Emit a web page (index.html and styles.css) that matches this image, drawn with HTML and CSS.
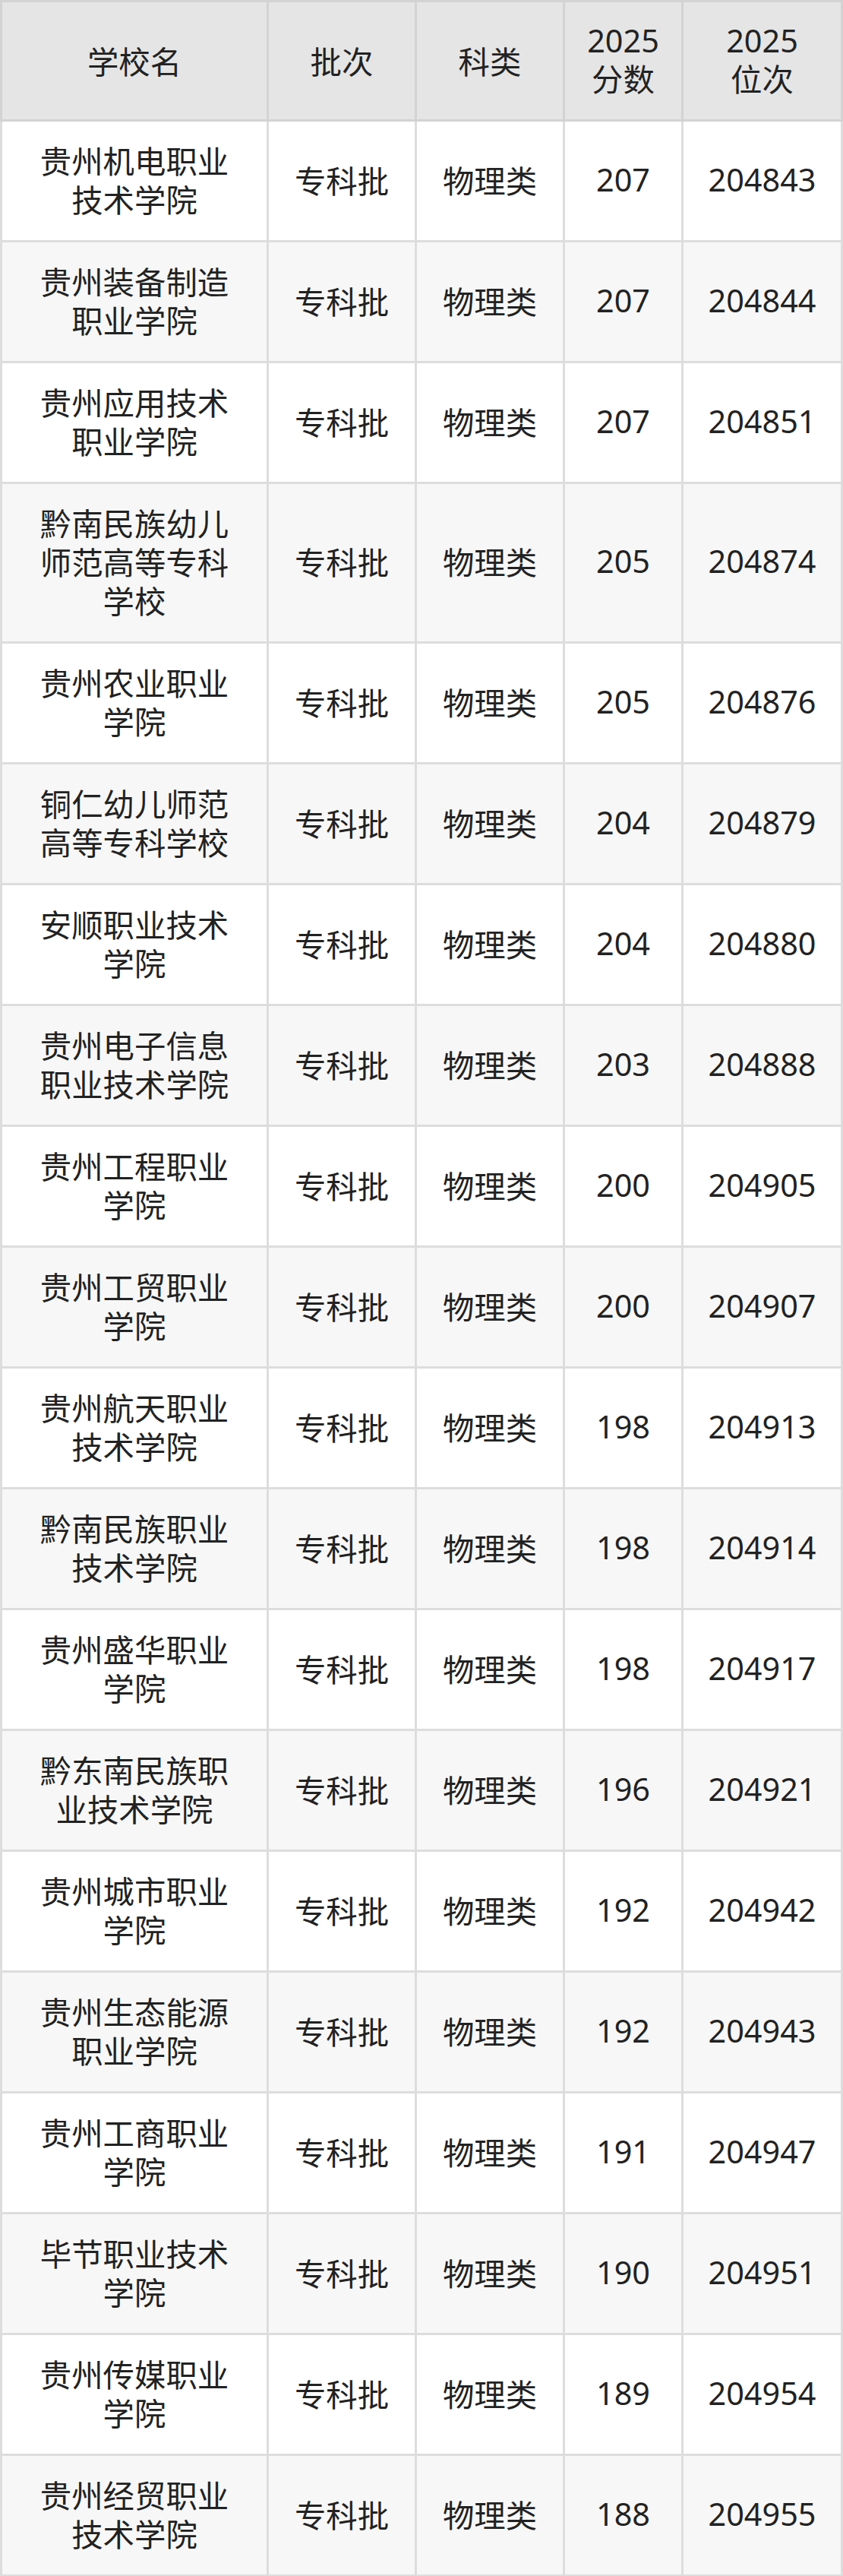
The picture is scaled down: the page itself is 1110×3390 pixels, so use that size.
FILE: index.html
```html
<!DOCTYPE html>
<html lang="zh-CN">
<head>
<meta charset="utf-8">
<title>贵州专科批物理类</title>
<link rel="stylesheet" href="styles.css">
</head>
<body>
<div class="table">
  <div class="row head">
    <div class="cell name">学校名</div>
    <div class="cell">批次</div>
    <div class="cell">科类</div>
    <div class="cell num two">2025<br>分数</div>
    <div class="cell num two">2025<br>位次</div>
  </div>
  <div class="row"><div class="cell name">贵州机电职业技术学院</div><div class="cell">专科批</div><div class="cell">物理类</div><div class="cell num">207</div><div class="cell num">204843</div></div>
  <div class="row alt"><div class="cell name">贵州装备制造职业学院</div><div class="cell">专科批</div><div class="cell">物理类</div><div class="cell num">207</div><div class="cell num">204844</div></div>
  <div class="row"><div class="cell name">贵州应用技术职业学院</div><div class="cell">专科批</div><div class="cell">物理类</div><div class="cell num">207</div><div class="cell num">204851</div></div>
  <div class="row alt"><div class="cell name">黔南民族幼儿师范高等专科学校</div><div class="cell">专科批</div><div class="cell">物理类</div><div class="cell num">205</div><div class="cell num">204874</div></div>
  <div class="row"><div class="cell name">贵州农业职业学院</div><div class="cell">专科批</div><div class="cell">物理类</div><div class="cell num">205</div><div class="cell num">204876</div></div>
  <div class="row alt"><div class="cell name">铜仁幼儿师范高等专科学校</div><div class="cell">专科批</div><div class="cell">物理类</div><div class="cell num">204</div><div class="cell num">204879</div></div>
  <div class="row"><div class="cell name">安顺职业技术学院</div><div class="cell">专科批</div><div class="cell">物理类</div><div class="cell num">204</div><div class="cell num">204880</div></div>
  <div class="row alt"><div class="cell name">贵州电子信息职业技术学院</div><div class="cell">专科批</div><div class="cell">物理类</div><div class="cell num">203</div><div class="cell num">204888</div></div>
  <div class="row"><div class="cell name">贵州工程职业学院</div><div class="cell">专科批</div><div class="cell">物理类</div><div class="cell num">200</div><div class="cell num">204905</div></div>
  <div class="row alt"><div class="cell name">贵州工贸职业学院</div><div class="cell">专科批</div><div class="cell">物理类</div><div class="cell num">200</div><div class="cell num">204907</div></div>
  <div class="row"><div class="cell name">贵州航天职业技术学院</div><div class="cell">专科批</div><div class="cell">物理类</div><div class="cell num">198</div><div class="cell num">204913</div></div>
  <div class="row alt"><div class="cell name">黔南民族职业技术学院</div><div class="cell">专科批</div><div class="cell">物理类</div><div class="cell num">198</div><div class="cell num">204914</div></div>
  <div class="row"><div class="cell name">贵州盛华职业学院</div><div class="cell">专科批</div><div class="cell">物理类</div><div class="cell num">198</div><div class="cell num">204917</div></div>
  <div class="row alt"><div class="cell name">黔东南民族职业技术学院</div><div class="cell">专科批</div><div class="cell">物理类</div><div class="cell num">196</div><div class="cell num">204921</div></div>
  <div class="row"><div class="cell name">贵州城市职业学院</div><div class="cell">专科批</div><div class="cell">物理类</div><div class="cell num">192</div><div class="cell num">204942</div></div>
  <div class="row alt"><div class="cell name">贵州生态能源职业学院</div><div class="cell">专科批</div><div class="cell">物理类</div><div class="cell num">192</div><div class="cell num">204943</div></div>
  <div class="row"><div class="cell name">贵州工商职业学院</div><div class="cell">专科批</div><div class="cell">物理类</div><div class="cell num">191</div><div class="cell num">204947</div></div>
  <div class="row alt"><div class="cell name">毕节职业技术学院</div><div class="cell">专科批</div><div class="cell">物理类</div><div class="cell num">190</div><div class="cell num">204951</div></div>
  <div class="row"><div class="cell name">贵州传媒职业学院</div><div class="cell">专科批</div><div class="cell">物理类</div><div class="cell num">189</div><div class="cell num">204954</div></div>
  <div class="row alt"><div class="cell name">贵州经贸职业技术学院</div><div class="cell">专科批</div><div class="cell">物理类</div><div class="cell num">188</div><div class="cell num">204955</div></div>
</div>
</body>
</html>
```
FILE: styles.css
```css
html, body {
  margin: 0;
  padding: 0;
  background: #ffffff;
}

.table {
  width: 1110px;
  box-sizing: border-box;
  display: flex;
  flex-direction: column;
  gap: 3px;
  padding: 0 3px 3px;
  background: #dddddd;
  font-family: "Noto Sans CJK SC", sans-serif;
  font-size: 41.4px;
  line-height: 51px;
  color: #222222;
}

.num {
  font-family: "Noto Sans", "Noto Sans CJK SC", sans-serif;
}

.row {
  display: grid;
  grid-template-columns: 348px 192px 192px 153px 207px;
  column-gap: 3px;
}

.cell {
  display: flex;
  align-items: center;
  justify-content: center;
  text-align: center;
  padding: 25px 24px 29px;
  background: #ffffff;
  box-sizing: border-box;
  min-width: 0;
}

.cell.name {
  padding-left: 40px;
  padding-right: 40px;
}

.row.alt .cell {
  background: #f7f7f7;
}

.row.head {
  margin: 0 -3px;
  padding: 3px;
  background: #d3d3d3;
}

.row.head .cell {
  background: #e5e5e5;
  padding-top: 25px;
  padding-bottom: 27px;
}

.row.head + .row {
  margin-top: -3px;
}
```
